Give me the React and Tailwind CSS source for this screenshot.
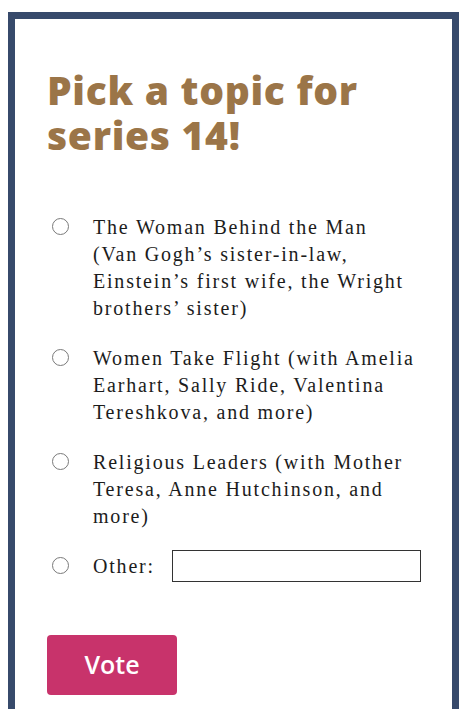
import React, { useState } from 'react';

const options = [
  "The Woman Behind the Man (Van Gogh\u2019s sister-in-law, Einstein\u2019s first wife, the Wright brothers\u2019 sister)",
  "Women Take Flight (with Amelia Earhart, Sally Ride, Valentina Tereshkova, and more)",
  "Religious Leaders (with Mother Teresa, Anne Hutchinson, and more)",
];

const serif = { fontFamily: "'Liberation Serif', 'DejaVu Serif', serif" };

const Radio = ({ checked, onClick }) => (
  <button
    type="button"
    onClick={onClick}
    className="mt-[4px] w-[17px] h-[17px] shrink-0 rounded-full border-[1.5px] border-[#7a7a7a] bg-white flex items-center justify-center"
  >
    {checked && <span className="w-[9px] h-[9px] rounded-full bg-[#1a73e8]" />}
  </button>
);

const App = () => {
  const [picked, setPicked] = useState(null);
  const [other, setOther] = useState('');

  return (
    <div className="min-h-[709px] bg-white pt-[12px] pl-[8px] pr-[10px]">
      <div className="border-[7px] border-b-0 border-[#374a6b] min-h-[700px] pl-[32px] pr-[30px] pt-[48px]">
        <h1
          className="text-[39px] leading-[45px] font-extrabold text-[#9b7548] tracking-[0.7px]"
          style={{ fontFamily: "'Open Sans', 'Liberation Sans', sans-serif" }}
        >
          Pick a topic for<br />series 14!
        </h1>

        <div className="mt-[57px] flex flex-col gap-[23px] pl-[5px]" style={serif}>
          {options.map((text, i) => (
            <label key={i} className="flex items-start gap-[24px] cursor-pointer" onClick={() => setPicked(i)}>
              <Radio checked={picked === i} />
              <span className="max-w-[323px] text-[20px] leading-[27px] tracking-[1.8px] text-[#1c1c1c]">{text}</span>
            </label>
          ))}
          <div className="flex items-start gap-[24px]">
            <Radio checked={picked === 3} onClick={() => setPicked(3)} />
            <div className="flex-1 flex items-center gap-[17px] -mt-[3px]">
              <span className="text-[20px] leading-[27px] tracking-[1.8px] text-[#1c1c1c]">Other:</span>
              <input
                value={other}
                onChange={(e) => setOther(e.target.value)}
                className="w-[249px] h-[32px] border border-[#333] outline-none px-2"
              />
            </div>
          </div>
        </div>

        <button
          className="mt-[53px] w-[130px] h-[60px] rounded-[4px] bg-[#c8336b] text-white text-[25px] font-semibold"
          style={{ fontFamily: "'Open Sans', 'Liberation Sans', sans-serif" }}
        >
          Vote
        </button>
      </div>
    </div>
  );
};

export default App;
